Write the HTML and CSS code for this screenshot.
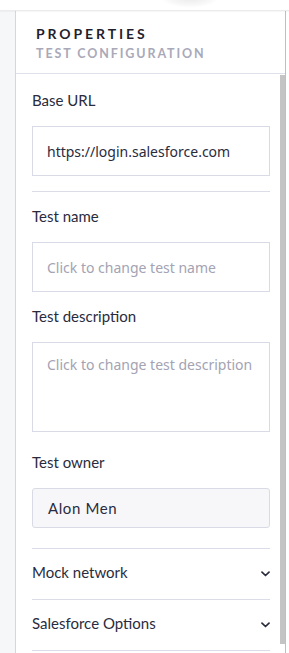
FILE: index.html
```html
<!DOCTYPE html>
<html>
<head>
<meta charset="utf-8">
<link rel="stylesheet" href="styles.css">
</head>
<body>
<div class="topbar"><span class="blob"></span></div>
<div class="main">
  <div class="rail"></div>
  <div class="panel">
    <div class="header">
      <div class="title">PROPERTIES</div>
      <div class="subtitle">TEST CONFIGURATION</div>
    </div>
    <div class="body">
      <div class="content">
        <div class="field first">
          <div class="label">Base URL</div>
          <div class="input value">https://login.salesforce.com</div>
        </div>
        <div class="divider"></div>
        <div class="field">
          <div class="label">Test name</div>
          <div class="input placeholder">Click to change test name</div>
        </div>
        <div class="field">
          <div class="label">Test description</div>
          <div class="input textarea placeholder">Click to change test description</div>
        </div>
        <div class="field">
          <div class="label">Test owner</div>
          <div class="owner">Alon Men</div>
        </div>
        <div class="divider gap"></div>
        <div class="acc">
          <span>Mock network</span>
          <svg class="chev" width="9" height="6" viewBox="0 0 9 6"><path d="M1 1.2l3.5 3.3L8 1.2" fill="none" stroke="#2a2b3d" stroke-width="1.7" stroke-linecap="round" stroke-linejoin="round"/></svg>
        </div>
        <div class="divider"></div>
        <div class="acc">
          <span>Salesforce Options</span>
          <svg class="chev" width="9" height="6" viewBox="0 0 9 6"><path d="M1 1.2l3.5 3.3L8 1.2" fill="none" stroke="#2a2b3d" stroke-width="1.7" stroke-linecap="round" stroke-linejoin="round"/></svg>
        </div>
        <div class="divider"></div>
      </div>
      <div class="scrollbar"></div>
    </div>
  </div>
</div>
</body>
</html>
```
FILE: styles.css
```css
html, body {
  margin: 0;
  padding: 0;
  background: #ffffff;
}
body {
  width: 289px;
  height: 653px;
  overflow: hidden;
  font-family: Lato, "Open Sans", sans-serif;
  color: #2a2b3d;
}
.topbar {
  position: relative;
  height: 10px;
  border-bottom: 1px solid #ebebee;
  box-shadow: 0 1px 1px rgba(0,0,0,0.03);
}
.blob {
  position: absolute;
  left: 160px;
  top: -14px;
  width: 60px;
  height: 22px;
  border-radius: 50%;
  background: radial-gradient(ellipse at center, rgba(0,0,0,0.09) 0%, rgba(0,0,0,0.03) 50%, rgba(0,0,0,0) 70%);
}
.main {
  display: flex;
  height: 642px;
}
.rail {
  width: 15px;
  background: #f6f7f9;
  border-right: 1px solid #d3d7de;
}
.panel {
  width: 269px;
  border-right: 1px solid #b8c1c5;
  display: flex;
  flex-direction: column;
}
.header {
  padding: 14px 0 11px 20px;
  border-bottom: 1px solid #dfe1ea;
}
.title {
  font-size: 14px;
  line-height: 18px;
  font-weight: 700;
  letter-spacing: 2.9px;
  color: #1f1f2e;
}
.subtitle {
  margin-top: 3px;
  font-size: 12.5px;
  line-height: 16px;
  font-weight: 700;
  letter-spacing: 1.9px;
  color: #a9a9b9;
}
.body {
  flex: 1;
  display: flex;
  min-height: 0;
}
.content {
  flex: 1;
  padding: 0 10px 0 16px;
}
.scrollbar {
  width: 5px;
  margin-top: 1px;
  margin-bottom: 9px;
  background: #c4c4c4;
}
.field {
  padding-top: 14px;
}
.field.first {
  padding-top: 16px;
}
.label {
  font-size: 15px;
  line-height: 20px;
  color: #2a2b3d;
  margin-bottom: 16px;
}
.input {
  box-sizing: border-box;
  height: 50px;
  border: 1px solid #d8dae6;
  padding: 0 12px 0 14px;
  display: flex;
  align-items: center;
  white-space: nowrap;
  overflow: hidden;
  font-family: "Noto Sans", "Open Sans", sans-serif;
  font-size: 14px;
}
.value {
  color: #2a2b3d;
}
.placeholder {
  color: #a3a3b3;
}
.textarea {
  height: 90px;
  align-items: flex-start;
  padding-top: 12px;
  margin-bottom: 6px;
}
.owner {
  box-sizing: border-box;
  height: 40px;
  border: 1px solid #d8dae6;
  border-radius: 3px;
  background: #f7f7fa;
  padding: 0 15px;
  display: flex;
  align-items: center;
  font-size: 15px;
  letter-spacing: 0.6px;
  color: #2a2b3d;
}
.divider {
  height: 1px;
  background: #dadce7;
  margin-top: 15px;
}
.divider.gap {
  margin-top: 20px;
}
.acc + .divider {
  margin-top: 0;
}
.acc {
  box-sizing: border-box;
  height: 50px;
  padding-bottom: 5px;
  display: flex;
  align-items: center;
  justify-content: space-between;
  font-size: 15px;
  color: #2a2b3d;
}
.chev {
  margin-top: 5px;
}
```
